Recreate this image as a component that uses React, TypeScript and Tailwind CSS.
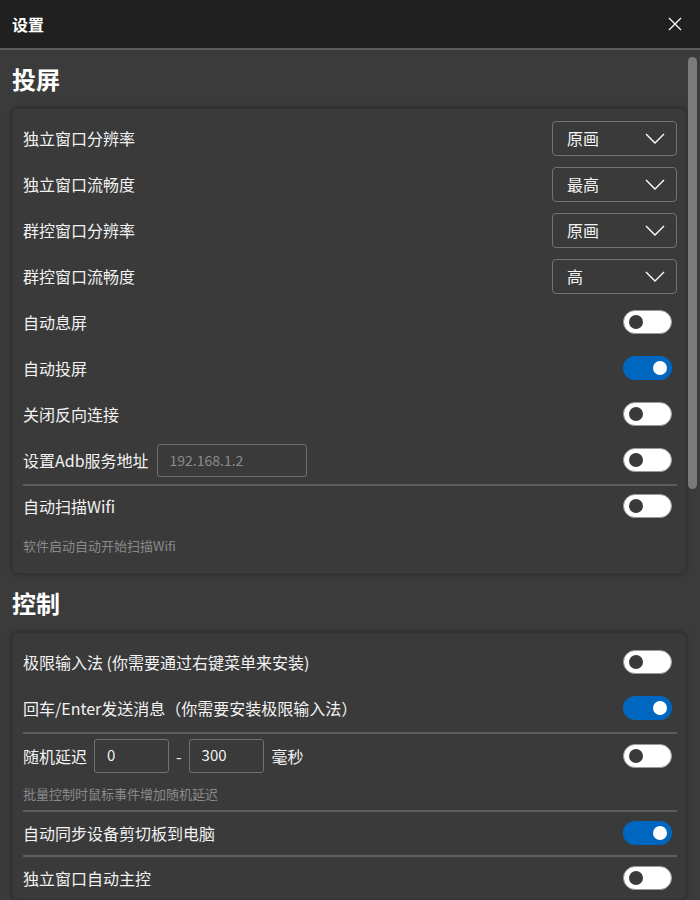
const font = { fontFamily: '"Microsoft YaHei", "Noto Sans CJK SC", "Noto Sans", sans-serif' };

function Toggle({ on }: { on?: boolean }) {
  return (
    <div
      className={
        'flex h-[24px] w-[49px] shrink-0 items-center rounded-full px-[5px] ' +
        (on ? 'justify-end bg-[#0067c0]' : 'justify-start border border-[#9a9a9a] bg-white')
      }
    >
      <div className={'h-[14px] w-[14px] rounded-full ' + (on ? 'bg-white' : 'bg-[#3a3a3a]')} />
    </div>
  );
}

function Chevron() {
  return (
    <svg width="20" height="11" viewBox="0 0 20 11" fill="none">
      <polyline points="1,1 10,10 19,1" stroke="white" strokeWidth="1.4" />
    </svg>
  );
}

function Select({ value }: { value: string }) {
  return (
    <div className="mr-[-5px] flex h-[35px] w-[125px] items-center justify-between rounded-[4px] border border-[#727272] pl-[14px] pr-[11px] text-[16px] text-[#f2f2f2]">
      <span>{value}</span>
      <Chevron />
    </div>
  );
}

function Row({ label, children, short }: { label: React.ReactNode; children: React.ReactNode; short?: boolean }) {
  return (
    <div className={'flex items-center justify-between ' + (short ? 'h-[42px]' : 'h-[46px]')}>
      <div className="flex items-center text-[16px] text-[#f2f2f2]">{label}</div>
      {children}
    </div>
  );
}

function Sep() {
  return <div className="mr-[-5px] mt-[1px] h-[2px] bg-[#5e5e5e]" />;
}

function Card({ children }: { children: React.ReactNode }) {
  return (
    <div className="rounded-[5px] border border-[#333333] bg-[#3a3a3a] pl-[10px] pr-[13px] pt-[6px] shadow-[0_0_4px_rgba(0,0,0,0.35)]">
      {children}
    </div>
  );
}

export default function App() {
  return (
    <div className="flex h-[900px] w-[700px] flex-col overflow-hidden bg-[#3b3b3b]" style={font}>
      <div className="flex h-[50px] shrink-0 items-center justify-between border-b-2 border-[#5c5c5c] bg-[#202020] pl-[12px] pr-[18px]">
        <span className="text-[16px] font-bold text-white">设置</span>
        <svg width="14" height="14" viewBox="0 0 14 14" fill="none">
          <path d="M1 1 13 13M13 1 1 13" stroke="white" strokeWidth="1.3" />
        </svg>
      </div>

      <div className="flex min-h-0 flex-1">
        <div className="min-w-0 flex-1 pl-[12px] pr-[2px]">
          <h2 className="flex h-[58px] items-center text-[24px] font-bold text-white">投屏</h2>
          <Card>
            <Row label="独立窗口分辨率"><Select value="原画" /></Row>
            <Row label="独立窗口流畅度"><Select value="最高" /></Row>
            <Row label="群控窗口分辨率"><Select value="原画" /></Row>
            <Row label="群控窗口流畅度"><Select value="高" /></Row>
            <Row label="自动息屏"><Toggle /></Row>
            <Row label="自动投屏"><Toggle on /></Row>
            <Row label="关闭反向连接"><Toggle /></Row>
            <Row
              label={
                <>
                  <span>设置Adb服务地址</span>
                  <div className="ml-[8px] flex h-[33px] w-[150px] items-center rounded-[3px] border border-[#707070] pl-[12px] text-[14px] text-[#8c8c8c]">
                    192.168.1.2
                  </div>
                </>
              }
            >
              <Toggle />
            </Row>
            <Sep />
            <div className="flex h-[40px] items-center justify-between">
              <span className="text-[16px] text-[#f2f2f2]">自动扫描Wifi</span>
              <Toggle />
            </div>
            <div className="pb-[17px] pt-[10px] text-[13px] text-[#8a8a8a]">软件启动自动开始扫描Wifi</div>
          </Card>

          <h2 className="flex h-[58px] items-center text-[24px] font-bold text-white">控制</h2>
          <Card>
            <Row label="极限输入法 (你需要通过右键菜单来安装)"><Toggle /></Row>
            <Row label="回车/Enter发送消息（你需要安装极限输入法）"><Toggle on /></Row>
            <Sep />
            <div className="flex h-[42px] items-center justify-between pt-[2px]">
              <div className="flex items-center text-[16px] text-[#f2f2f2]">
                <span>随机延迟</span>
                <div className="ml-[7px] flex h-[34px] w-[75px] items-center rounded-[3px] border border-[#707070] pl-[12px] text-[15px]">0</div>
                <span className="mx-[7px]">-</span>
                <div className="flex h-[34px] w-[75px] items-center rounded-[3px] border border-[#707070] pl-[12px] text-[15px]">300</div>
                <span className="ml-[8px]">毫秒</span>
              </div>
              <Toggle />
            </div>
            <div className="pb-[6px] pt-[8px] text-[13px] text-[#8a8a8a]">批量控制时鼠标事件增加随机延迟</div>
            <Sep />
            <Row short label="自动同步设备剪切板到电脑"><Toggle on /></Row>
            <Sep />
            <Row short label="独立窗口自动主控"><Toggle /></Row>
          </Card>
        </div>
        <div className="w-[12px] shrink-0 pt-[7px]">
          <div className="h-[432px] w-[9px] rounded-full bg-[#7a7a7a]" />
        </div>
      </div>
    </div>
  );
}
